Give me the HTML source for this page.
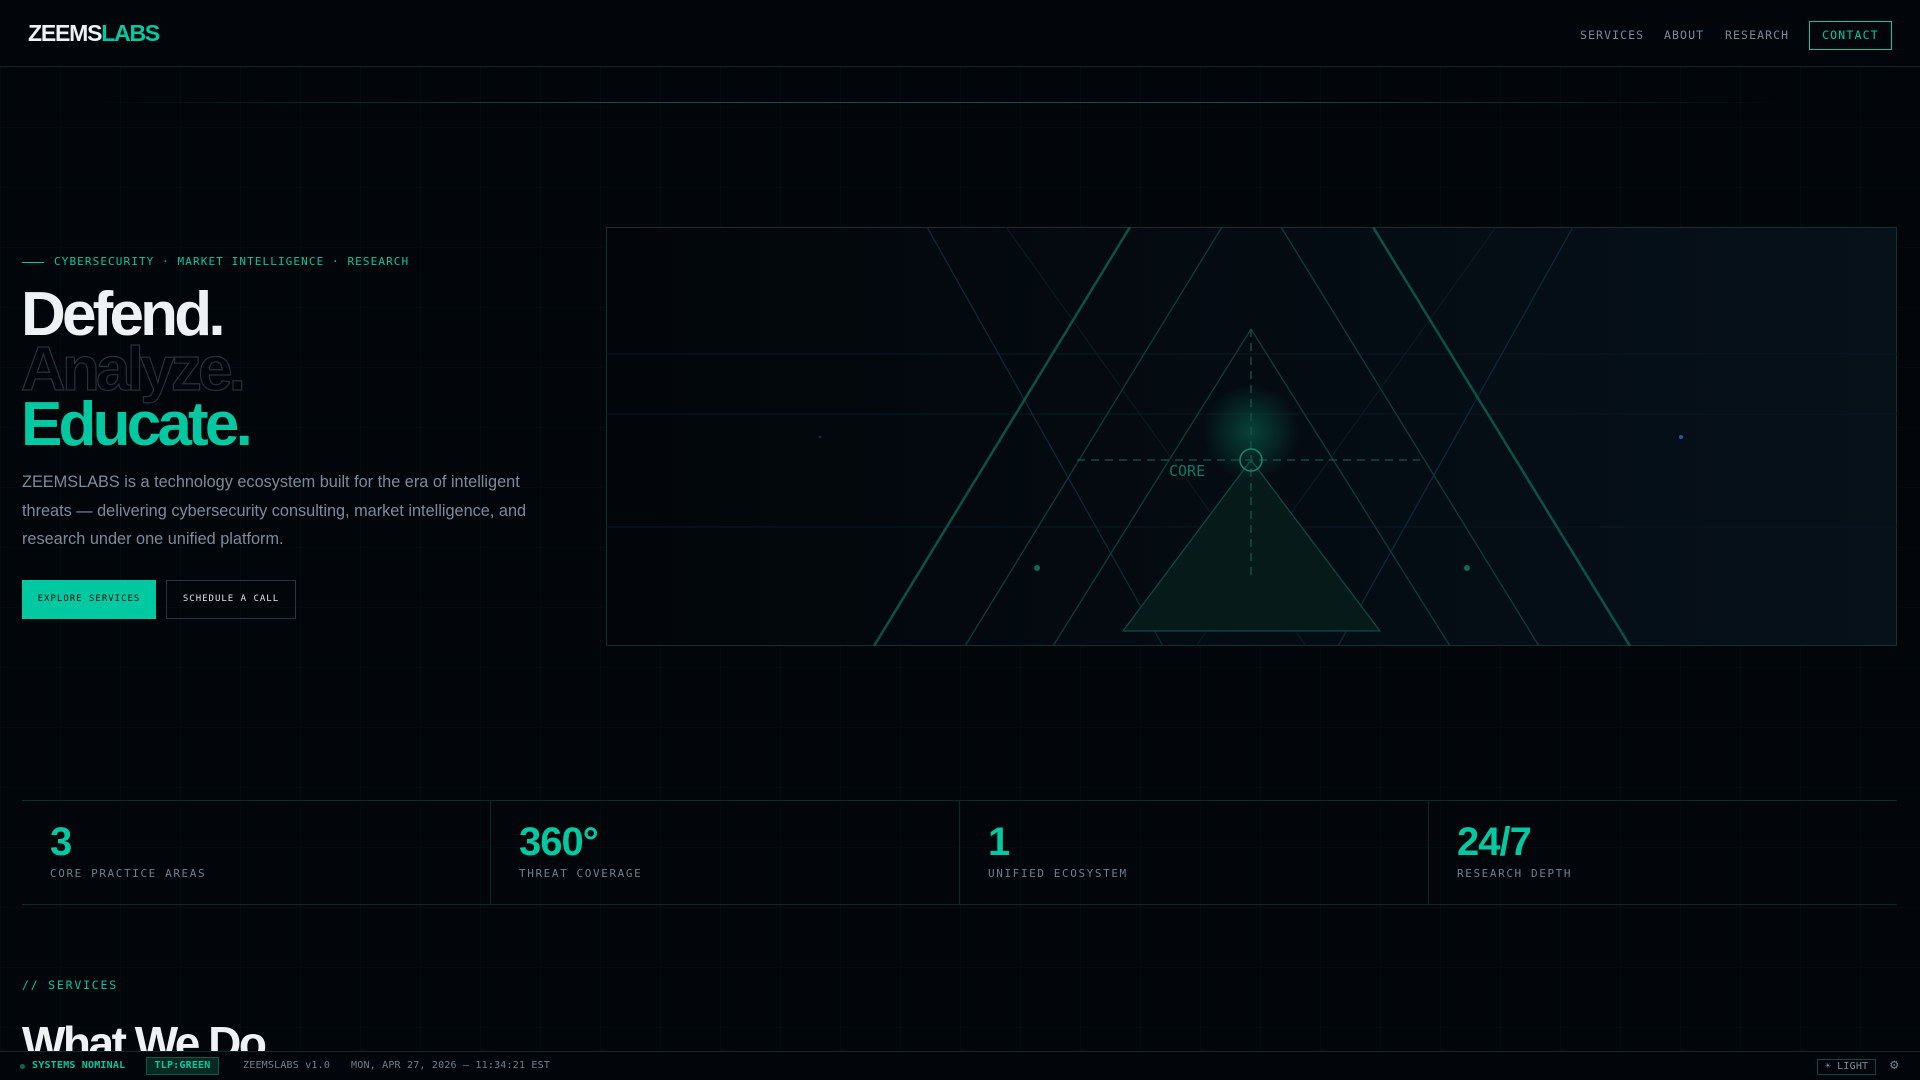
<!DOCTYPE html>
<html><head><meta charset="utf-8"><style>
*{margin:0;padding:0;box-sizing:border-box}
body{width:1920px;height:1080px;overflow:hidden;background:#020509;font-family:"Liberation Sans",sans-serif;position:relative;
background-image:linear-gradient(rgba(0,200,160,0.035) 1px,transparent 1px),linear-gradient(90deg,rgba(0,200,160,0.035) 1px,transparent 1px);background-size:60px 60px;background-position:0 7px}
.mono{font-family:"DejaVu Sans Mono","Liberation Mono",monospace}
.abs{position:absolute}
.nav{left:0;top:0;width:1920px;height:67px;border-bottom:1px solid #0c2320;background:#020509}
.logo{left:28px;top:20px;font-size:23px;font-weight:bold;letter-spacing:-1.2px;color:#eef2f5}
.logo span{color:#00c8a0}
.nl{top:28px;font-size:11.5px;letter-spacing:1.1px;color:#7a8a99}
.contact{left:1809px;top:21px;width:83px;height:29px;border:1.5px solid #00c8a0;color:#00c8a0;font-size:11.5px;letter-spacing:1.2px;text-align:center;line-height:26px}
.eb{left:54px;top:255px;font-size:11px;letter-spacing:1.1px;color:#00c8a0}
h1{position:absolute;left:21px;top:287px;font-size:62px;line-height:55px;letter-spacing:-3.8px;font-weight:bold}
.p{left:22px;top:468px;width:540px;font-size:16.3px;line-height:28.5px;color:#7d8b99}
.btn{top:580px;height:39px;font-size:9px;letter-spacing:1px;text-align:center;line-height:38px}
.stat{top:800px;height:105px;border-top:1px solid #0c2a25;border-bottom:1px solid #0c2a25}
.num{font-size:40px;font-weight:bold;color:#00c8a0;letter-spacing:-1px;position:absolute;left:28px;top:19px}
.lab{position:absolute;left:28px;top:66px;font-size:11px;letter-spacing:1.6px;color:#6f7f8d}
.sb{left:0;top:1051px;width:1920px;height:29px;background:#02060a;border-top:1px solid #0c2a25;font-size:10px;letter-spacing:0.2px}
</style></head><body>
<div class="abs nav"></div>
<div class="abs logo">ZEEMS<span>LABS</span></div>
<div class="abs nl mono" style="left:1580px">SERVICES</div>
<div class="abs nl mono" style="left:1664px">ABOUT</div>
<div class="abs nl mono" style="left:1725px">RESEARCH</div>
<div class="abs contact mono">CONTACT</div>
<div class="abs" style="left:86px;top:102px;width:1702px;height:1px;background:linear-gradient(90deg,transparent,#1d4a44 30%,#1d4a44 70%,transparent)"></div>

<div class="abs" style="left:22px;top:262px;width:22px;height:1px;background:#00c8a0"></div>
<div class="abs eb mono">CYBERSECURITY · MARKET INTELLIGENCE · RESEARCH</div>
<h1><div style="color:#eef2f5">Defend.</div><div style="color:transparent;-webkit-text-stroke:1.2px #2a3038">Analyze.</div><div style="color:#00c8a0">Educate.</div></h1>
<div class="abs p">ZEEMSLABS is a technology ecosystem built for the era of intelligent threats — delivering cybersecurity consulting, market intelligence, and research under one unified platform.</div>
<div class="abs btn mono" style="left:22px;width:134px;background:#00c8a0;color:#03140f">EXPLORE SERVICES</div>
<div class="abs btn mono" style="left:166px;width:130px;border:1px solid #2a333c;color:#dfe6ea;line-height:37px">SCHEDULE A CALL</div>

<svg class="abs" style="left:606px;top:227px" width="1291" height="419" viewBox="0 0 1291 419">
<defs>
<linearGradient id="bg" x1="0" x2="1"><stop offset="0" stop-color="#02060a"/><stop offset="1" stop-color="#06111a"/></linearGradient>
<radialGradient id="gl"><stop offset="0" stop-color="#0a5a48" stop-opacity="0.7"/><stop offset="1" stop-color="#0a5a48" stop-opacity="0"/></radialGradient>
</defs>
<rect x="0.5" y="0.5" width="1290" height="418" fill="url(#bg)" stroke="#12302d"/>
<g stroke="#0a1820" stroke-width="1"><line x1="0" y1="127" x2="1291" y2="127"/><line x1="0" y1="187" x2="1291" y2="187"/><line x1="0" y1="300" x2="1291" y2="300"/></g>
<line x1="321" y1="0" x2="557" y2="419" stroke="#0d2a3a" stroke-width="1.2"/>
<line x1="967" y1="0" x2="732" y2="419" stroke="#0d2a3a" stroke-width="1.2"/>
<line x1="400" y1="0" x2="700" y2="419" stroke="#0a1e24" stroke-width="1"/>
<line x1="890" y1="0" x2="590" y2="419" stroke="#0a1e24" stroke-width="1"/>
<line x1="524" y1="0" x2="268" y2="419" stroke="#0b5a48" stroke-width="2.5" opacity="0.9"/>
<line x1="767" y1="0" x2="1024" y2="419" stroke="#0b5a48" stroke-width="2.5" opacity="0.9"/>
<line x1="616" y1="0" x2="359" y2="419" stroke="#0c3e38" stroke-width="1.3"/>
<line x1="675" y1="0" x2="933" y2="419" stroke="#0c3e38" stroke-width="1.3"/>
<line x1="645" y1="102" x2="447" y2="419" stroke="#0c3e38" stroke-width="1.3"/>
<line x1="645" y1="102" x2="844" y2="419" stroke="#0c3e38" stroke-width="1.3"/>
<polygon points="645,233 517,404 774,404" fill="#061a1a" stroke="#0c4a40" stroke-width="1.3"/>
<circle cx="645" cy="205" r="48" fill="url(#gl)"/>
<line x1="645" y1="102" x2="645" y2="351" stroke="#0e5a4a" stroke-width="1.3" stroke-dasharray="8 6"/>
<line x1="471" y1="233" x2="814" y2="233" stroke="#0e5a4a" stroke-width="1.3" stroke-dasharray="8 6"/>
<circle cx="645" cy="233" r="11" fill="none" stroke="#0f8a6c" stroke-width="1.5"/>
<text x="563" y="249" font-family="DejaVu Sans Mono,monospace" font-size="15" fill="#0f7a60">CORE</text>
<circle cx="431" cy="341" r="3" fill="#0d6a55"/>
<circle cx="861" cy="341" r="3" fill="#0d6a55"/>
<circle cx="1075" cy="210" r="2" fill="#1a5aaa"/>
<circle cx="214" cy="210" r="1.5" fill="#0c2a3a"/>
</svg>

<div class="abs stat" style="left:22px;width:469px;border-right:1px solid #0c2a25"><div class="num">3</div><div class="lab mono">CORE PRACTICE AREAS</div></div>
<div class="abs stat" style="left:491px;width:469px;border-right:1px solid #0c2a25"><div class="num">360°</div><div class="lab mono">THREAT COVERAGE</div></div>
<div class="abs stat" style="left:960px;width:469px;border-right:1px solid #0c2a25"><div class="num">1</div><div class="lab mono">UNIFIED ECOSYSTEM</div></div>
<div class="abs stat" style="left:1429px;width:468px"><div class="num">24/7</div><div class="lab mono">RESEARCH DEPTH</div></div>

<div class="abs mono" style="left:22px;top:978px;font-size:11.5px;letter-spacing:1.8px;color:#00c8a0">// SERVICES</div>
<div class="abs" style="left:22px;top:1016px;font-size:46px;font-weight:bold;letter-spacing:-2.5px;color:#eef2f5">What We Do</div>

<div class="abs sb mono">
<div class="abs" style="left:20px;top:12px;width:5px;height:5px;border-radius:50%;background:#0a6a55"></div>
<div class="abs" style="left:32px;top:8px;color:#00c8a0;font-weight:bold">SYSTEMS NOMINAL</div>
<div class="abs" style="left:146px;top:5px;width:73px;height:18px;border:1px solid #0b5a48;background:#062a22;color:#00c8a0;text-align:center;line-height:16px;font-weight:bold">TLP:GREEN</div>
<div class="abs" style="left:243px;top:8px;color:#6f7f8d">ZEEMSLABS v1.0</div>
<div class="abs" style="left:351px;top:8px;color:#6f7f8d">MON, APR 27, 2026 — 11:34:21 EST</div>
<div class="abs" style="left:1817px;top:7px;width:59px;height:16px;border:1px solid #0b4a3e;color:#7a8a99;text-align:center;line-height:14px">☀ LIGHT</div>
<div class="abs" style="left:1890px;top:5px;color:#6f7f8d;font-size:14px">⚙</div>
</div>
</body></html>
